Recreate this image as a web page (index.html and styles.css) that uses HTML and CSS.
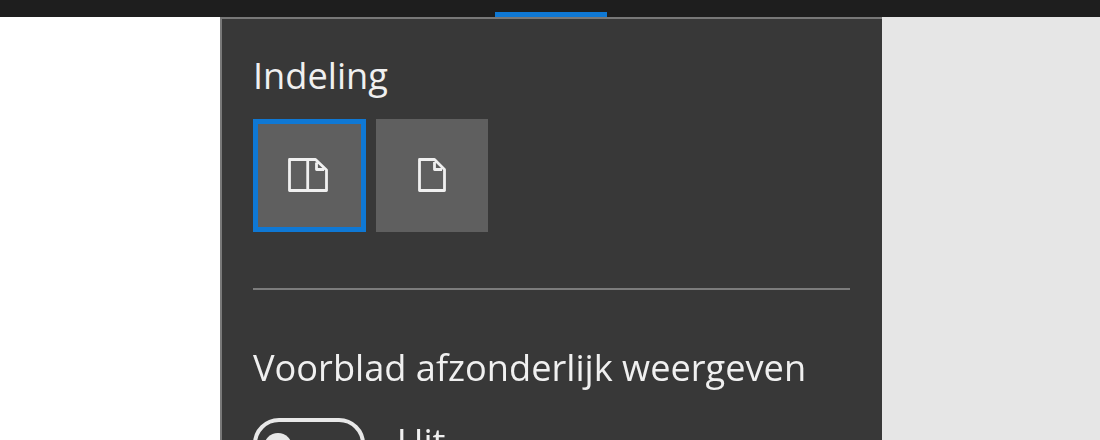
FILE: index.html
```html
<!DOCTYPE html>
<html lang="nl">
<head>
<meta charset="utf-8">
<title>Indeling</title>
<link rel="stylesheet" href="styles.css">
</head>
<body>
<div class="topbar"><div class="tab-marker"></div></div>
<div class="main">
  <div class="page-left"></div>
  <section class="panel">
    <h2 class="heading">Indeling</h2>
    <div class="layout-options">
      <button class="option selected" aria-label="Twee pagina's">
        <svg class="icon" width="42" height="34" viewBox="0 0 42 34" fill="none">
          <path d="M1.5 1.5H27.5L38.5 12V32.5H1.5ZM19.7 1.5V32.5M28.5 4.5V11.5H36" stroke="#f0f0f0" stroke-width="2.8" stroke-linejoin="round"/>
        </svg>
      </button>
      <button class="option" aria-label="Eén pagina">
        <svg class="icon" width="28" height="34" viewBox="0 0 28 34" fill="none">
          <path d="M1.5 1.5H16.5L26.5 11.5V32.5H1.5ZM16.5 4V11.5H24" stroke="#f0f0f0" stroke-width="2.8" stroke-linejoin="round"/>
        </svg>
      </button>
    </div>
    <hr class="divider">
    <h2 class="heading second">Voorblad afzonderlijk weergeven</h2>
    <div class="toggle-row">
      <div class="toggle"><span class="knob"></span></div>
      <span class="toggle-label">Uit</span>
    </div>
  </section>
  <div class="page-right"></div>
</div>
</body>
</html>
```
FILE: styles.css
```css
html, body {
  margin: 0;
  width: 1100px;
  height: 440px;
  overflow: hidden;
  background: #fff;
  font-family: "Open Sans", "Noto Sans", sans-serif;
}
.topbar {
  height: 17px;
  background: #1e1e1e;
  position: relative;
  z-index: 1;
}
.tab-marker {
  position: absolute;
  left: 495px;
  top: 12px;
  width: 112px;
  height: 5px;
  background: #0f78d4;
}
.main {
  display: flex;
  height: 423px;
}
.page-left {
  width: 220px;
  background: #fff;
}
.panel {
  width: 662px;
  box-sizing: border-box;
  background: #383838;
  border-top: 2px solid #787878;
  border-left: 2px solid #787878;
  padding: 0 32px 0 31px;
  filter: blur(0.6px);
}
.heading {
  margin: 0;
  font-size: 36.2px;
  font-weight: 400;
  line-height: 46px;
  color: #f0f0f0;
}
.panel > .heading:first-child {
  margin-top: 33px;
}
.layout-options {
  display: flex;
  gap: 10px;
  margin-top: 21px;
}
.option {
  width: 112.5px;
  height: 112.5px;
  padding: 0;
  box-sizing: border-box;
  background: #5f5f5f;
  border: 0;
  display: flex;
  align-items: center;
  justify-content: center;
}
.option.selected {
  border: 5px solid #0f78d4;
}
.divider {
  margin: 56.5px 0 0;
  border: 0;
  height: 2px;
  background: #7c7c7c;
}
.heading.second {
  margin-top: 54px;
}
.toggle-row {
  display: flex;
  align-items: flex-start;
  gap: 32px;
  margin-top: 28px;
}
.toggle {
  width: 112px;
  height: 52px;
  box-sizing: border-box;
  border: 4px solid #e8e8e8;
  border-radius: 26px;
  position: relative;
  flex: none;
}
.knob {
  position: absolute;
  left: 7px;
  top: 11px;
  width: 28px;
  height: 28px;
  border-radius: 50%;
  background: #e8e8e8;
}
.toggle-label {
  font-size: 36.2px;
  line-height: 46px;
  color: #f0f0f0;
}
.page-right {
  flex: 1;
  background: #e6e6e6;
}
```
